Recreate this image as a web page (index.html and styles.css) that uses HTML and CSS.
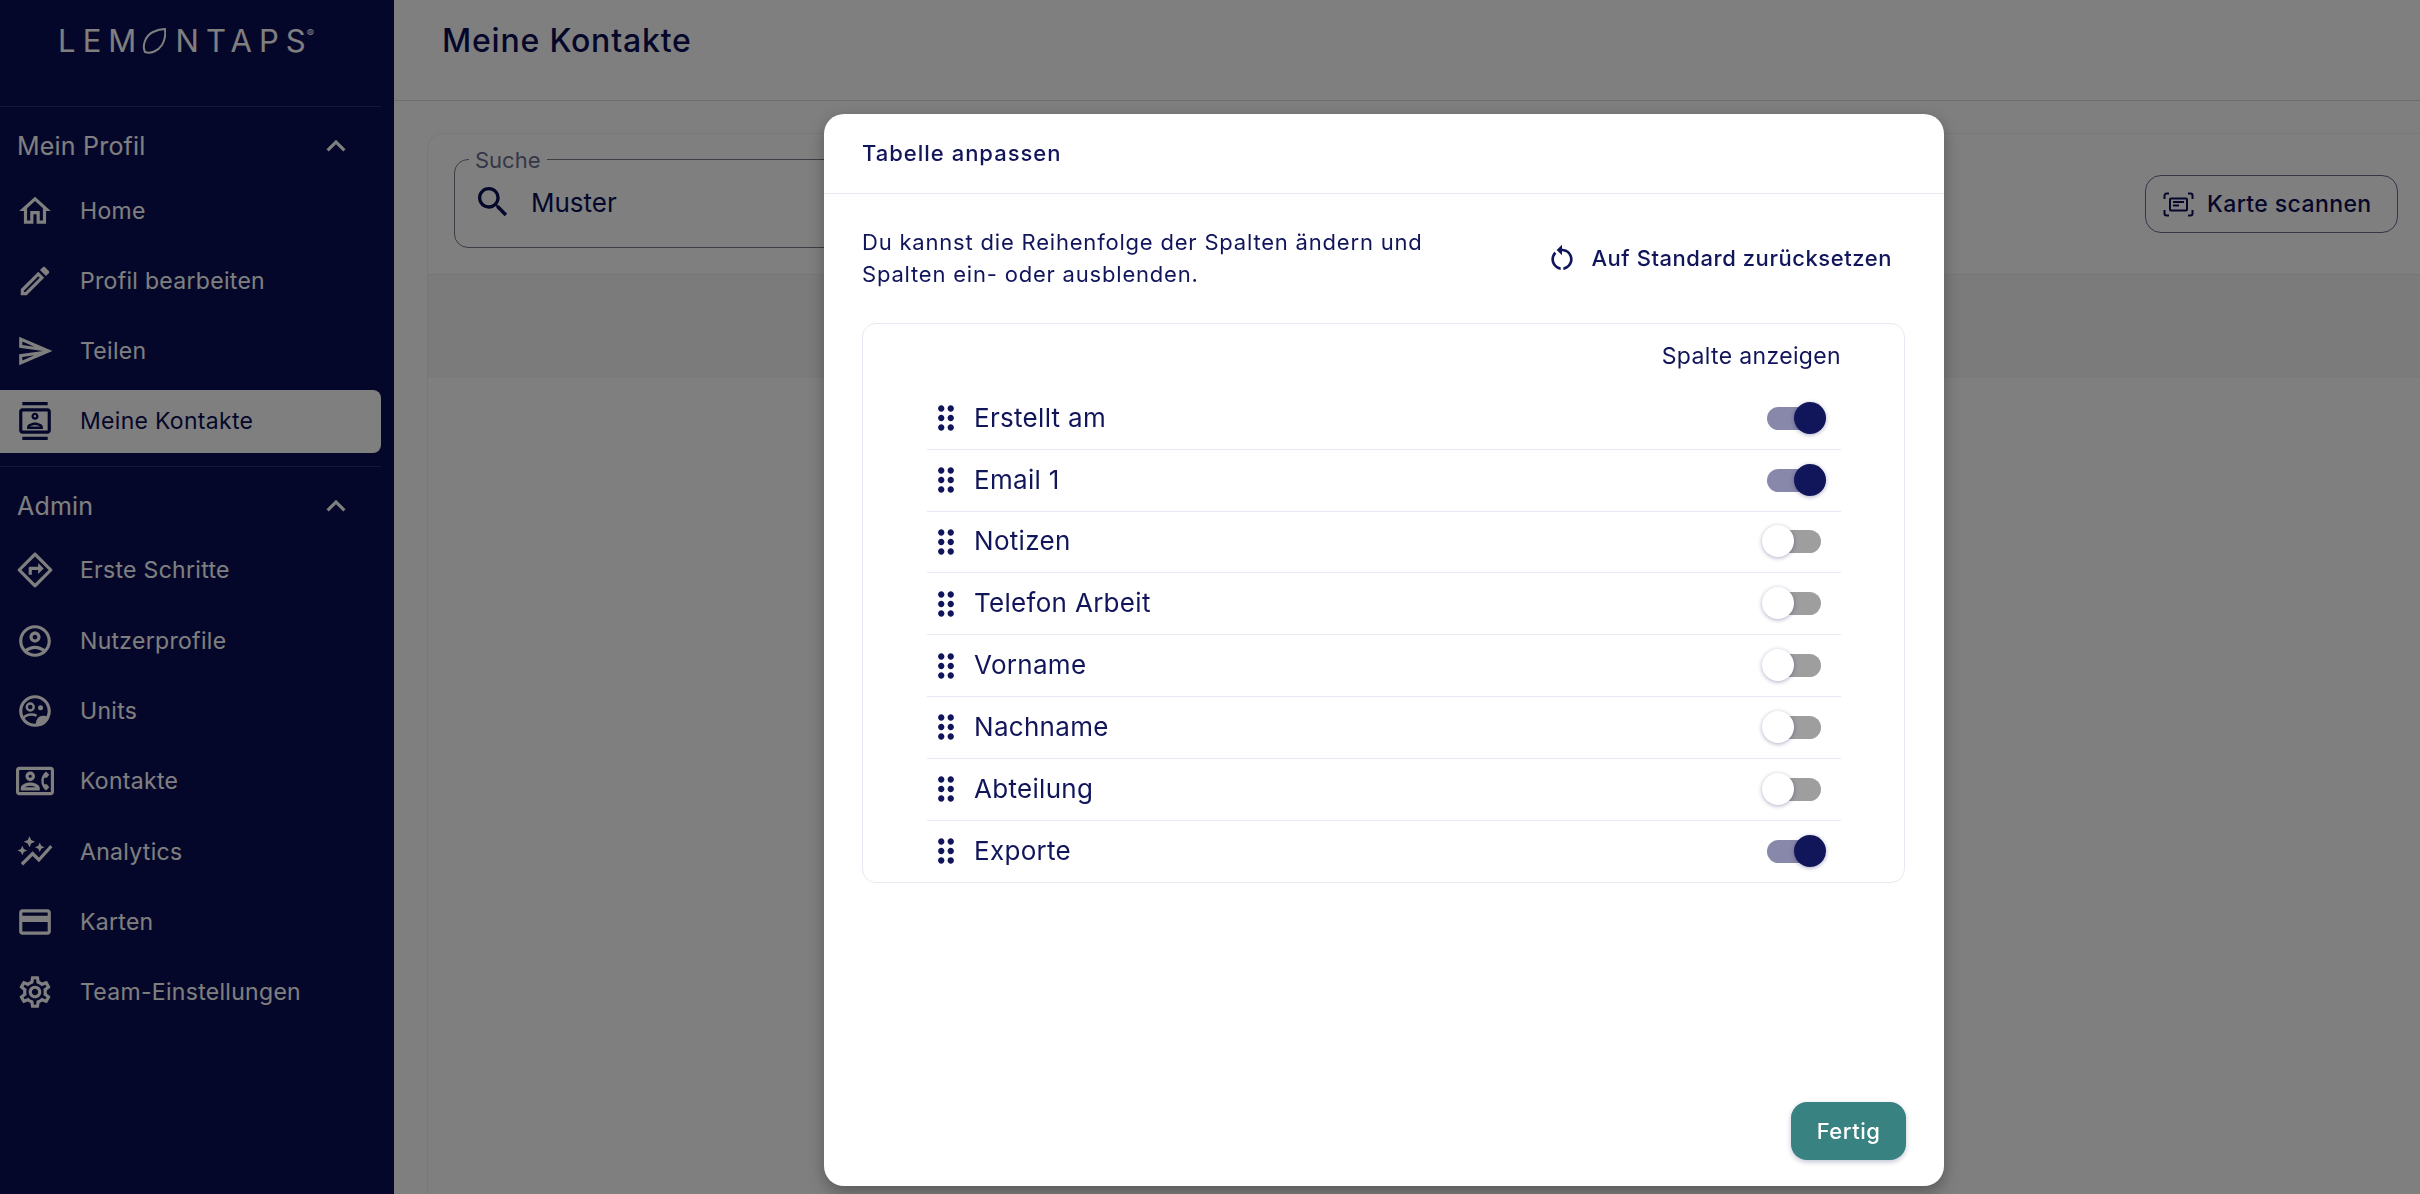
FILE: index.html
```html
<!DOCTYPE html>
<html lang="de">
<head>
  <meta charset="UTF-8">
  <title>Meine Kontakte</title>
  <link rel="stylesheet" href="styles.css">
</head>
<body>

<div class="app">
  <aside class="sidebar">
    <div class="logo">
      <span>LEM</span>
      <svg class="logo-lemon" viewBox="0 0 24 26"><path d="M3 24C0 18 3 8 11 4 16 1.500 20 1 23 1 23.500 5 23 12 20 17 16 23 9 26 3 24Z"/></svg>
      <span>NTAPS</span>
      <sup class="logo-reg">®</sup>
    </div>

    <nav class="nav-section">
      <div class="nav-head">
        <span>Mein Profil</span>
        <svg class="icon" viewBox="0 0 24 24"><path d="m12 8-6 6 1.41 1.41L12 10.83l4.59 4.58L18 14z"/></svg>
      </div>
      <ul class="nav-list">
        <li class="nav-item">
          <svg class="icon" viewBox="0 0 24 24"><path d="M12 5.69l5 4.5V18h-2v-6H9v6H7v-7.81l5-4.5M12 3L2 12h3v8h6v-6h2v6h6v-8h3L12 3z"/></svg>
          Home
        </li>
        <li class="nav-item">
          <svg class="icon" viewBox="0 0 24 24"><path d="M3 17.25V21h3.75L17.81 9.94l-3.75-3.75L3 17.25zM5.92 19H5v-.92l9.06-9.06.92.92L5.92 19zM20.71 5.63l-2.34-2.34c-.2-.2-.45-.29-.71-.29s-.51.1-.7.29l-1.83 1.83 3.75 3.75 1.83-1.83c.39-.39.39-1.02 0-1.41z"/></svg>
          Profil bearbeiten
        </li>
        <li class="nav-item">
          <svg class="icon" viewBox="0 0 24 24"><path d="M4.01 6.03l7.51 3.22-7.52-1 .01-2.22m7.5 8.72L4 17.97v-2.22l7.51-1M2.01 3L2 10l15 2-15 2 .01 7L23 12 2.01 3z"/></svg>
          Teilen
        </li>
        <li class="nav-item active">
          <svg class="icon" viewBox="0 0 24 24"><path d="M20 0H4v2h16V0zM4 24h16v-2H4v2zM20 4H4c-1.1 0-2 .9-2 2v12c0 1.1.9 2 2 2h16c1.1 0 2-.9 2-2V6c0-1.1-.9-2-2-2zm0 14H4V6h16v12zm-8-6.75c1.24 0 2.25-1.01 2.25-2.25S13.24 6.75 12 6.75 9.75 7.76 9.75 9s1.01 2.25 2.25 2.25zm0-3c.41 0 .75.34.75.75s-.34.75-.75.75-.75-.34-.75-.75.34-.75.75-.75zM17 15.99c0-2.09-3.31-2.99-5-2.99s-5 .9-5 2.99V17h10v-1.01zm-8.19-.49c.61-.52 2.03-1 3.19-1 1.17 0 2.59.48 3.2 1H8.81z"/></svg>
          Meine Kontakte
        </li>
      </ul>
    </nav>

    <nav class="nav-section">
      <div class="nav-head">
        <span>Admin</span>
        <svg class="icon" viewBox="0 0 24 24"><path d="m12 8-6 6 1.41 1.41L12 10.83l4.59 4.58L18 14z"/></svg>
      </div>
      <ul class="nav-list">
        <li class="nav-item">
          <svg class="icon" viewBox="0 0 24 24"><path d="M14 10H9c-.6 0-1 .4-1 1v4h2v-3h4v2.5l3.5-3.5L14 7.5V10zm8.7 1.3l-10-10c-.4-.4-1-.4-1.4 0l-10 10c-.4.4-.4 1 0 1.4l10 10c.2.2.5.3.7.3s.5-.1.7-.3l10-10c.4-.4.4-1 0-1.4zM12 20.6L3.4 12 12 3.4l8.6 8.6-8.6 8.6z"/></svg>
          Erste Schritte
        </li>
        <li class="nav-item">
          <svg class="icon" viewBox="0 0 24 24"><path d="M12 2C6.48 2 2 6.48 2 12s4.48 10 10 10 10-4.48 10-10S17.52 2 12 2zM7.35 18.5C8.66 17.56 10.26 17 12 17s3.34.56 4.65 1.5c-1.31.94-2.91 1.5-4.65 1.5s-3.34-.56-4.65-1.5zm10.79-1.38C16.45 15.8 14.32 15 12 15s-4.45.8-6.14 2.12C4.7 15.73 4 13.95 4 12c0-4.42 3.58-8 8-8s8 3.58 8 8c0 1.95-.7 3.73-1.86 5.12zM12 6c-1.93 0-3.5 1.57-3.5 3.5S10.07 13 12 13s3.5-1.57 3.5-3.5S13.93 6 12 6zm0 5c-.83 0-1.5-.67-1.5-1.5S11.17 8 12 8s1.5.67 1.5 1.5S12.83 11 12 11z"/></svg>
          Nutzerprofile
        </li>
        <li class="nav-item">
          <svg class="icon" viewBox="0 0 24 24">
            <path d="M12 2C6.48 2 2 6.48 2 12s4.48 10 10 10 10-4.48 10-10S17.52 2 12 2zm0 18c-4.42 0-8-3.58-8-8s3.58-8 8-8 8 3.58 8 8-3.58 8-8 8z"/>
            <circle class="icon-line" cx="9" cy="9.5" r="2.2"/>
            <circle cx="15.5" cy="10" r="1.6"/>
            <path class="icon-line" d="M4.500 16.500c1.300-1.500 3.200-2.300 5.200-2.300 1.200 0 2.300.2 3.300.8"/>
            <path d="M12.500 21.500c-.3-3.500 1.500-6.500 4.500-6.500 1.500 0 3 .4 4 1.200C19.500 19.800 16.500 22 12.500 21.500z"/>
          </svg>
          Units
        </li>
        <li class="nav-item">
          <svg class="icon" viewBox="0 0 24 24"><path d="M22 3H2C.9 3 0 3.900 0 5v14c0 1.100.9 2 2 2h20c1.100 0 1.990-.9 1.990-2L24 5c0-1.100-.9-2-2-2zm0 16H2V5h20v14zm-2.990-1.010l1.990-2-1.510-2h-1.640c-.22-.63-.35-1.300-.35-2s.13-1.370.35-2h1.640l1.510-2-1.990-2c-1.310.98-2.280 2.370-2.730 4-.18.64-.28 1.310-.28 2s.1 1.360.28 2c.45 1.620 1.420 3.020 2.730 4zM9 12c1.650 0 3-1.350 3-3s-1.350-3-3-3-3 1.350-3 3 1.350 3 3 3zm0-4c.55 0 1 .45 1 1s-.45 1-1 1-1-.45-1-1 .45-1 1-1zm6 8.590c0-2.500-3.970-3.580-6-3.580s-6 1.080-6 3.580V18h12v-1.410zM5.480 16c.74-.5 2.220-1 3.520-1s2.770.49 3.520 1H5.480z"/></svg>
          Kontakte
        </li>
        <li class="nav-item">
          <svg class="icon" viewBox="0 0 24 24"><path d="M14.06 9.94 12 9l2.06-.94L15 6l.94 2.06L18 9l-2.06.94L15 12l-.94-2.06zM4 14l.94-2.06L7 11l-2.06-.94L4 8l-.94 2.06L1 11l2.06.94L4 14zm4.500-5 1.090-2.410L12 5.500 9.590 4.410 8.500 2 7.410 4.410 5 5.500l2.410 1.090L8.500 9zm-4 11.500 6-6.010 4 4L23 8.930l-1.410-1.410-7.090 7.970-4-4L3 19l1.500 1.500z"/></svg>
          Analytics
        </li>
        <li class="nav-item">
          <svg class="icon" viewBox="0 0 24 24"><path d="M20 4H4c-1.11 0-1.99.89-1.99 2L2 18c0 1.11.89 2 2 2h16c1.11 0 2-.89 2-2V6c0-1.11-.89-2-2-2zm0 14H4v-6h16v6zm0-10H4V6h16v2z"/></svg>
          Karten
        </li>
        <li class="nav-item">
          <svg class="icon" viewBox="0 0 24 24"><path d="M19.43 12.98c.04-.32.07-.64.07-.98 0-.34-.03-.66-.07-.98l2.11-1.65c.19-.15.24-.42.12-.64l-2-3.46c-.09-.16-.26-.25-.44-.25-.06 0-.12.01-.17.03l-2.49 1c-.52-.4-1.08-.73-1.69-.98l-.38-2.65C14.46 2.18 14.25 2 14 2h-4c-.25 0-.46.18-.49.42l-.38 2.65c-.61.25-1.17.59-1.69.98l-2.49-1c-.06-.02-.12-.03-.18-.03-.17 0-.34.09-.43.25l-2 3.46c-.13.22-.07.49.12.64l2.11 1.65c-.04.32-.07.65-.07.98 0 .33.03.66.07.98l-2.11 1.65c-.19.15-.24.42-.12.64l2 3.46c.09.16.26.25.44.25.06 0 .12-.01.17-.03l2.49-1c.52.4 1.08.73 1.69.98l.38 2.65c.03.24.24.42.49.42h4c.25 0 .46-.18.49-.42l.38-2.65c.61-.25 1.17-.59 1.69-.98l2.49 1c.06.02.12.03.18.03.17 0 .34-.09.43-.25l2-3.46c.12-.22.07-.49-.12-.64l-2.11-1.65zm-1.98-1.71c.04.31.05.52.05.73 0 .21-.02.43-.05.73l-.14 1.13.89.7 1.08.84-.7 1.21-1.27-.51-1.04-.42-.9.68c-.43.32-.84.56-1.25.73l-1.06.43-.16 1.13-.2 1.35h-1.4l-.19-1.35-.16-1.13-1.06-.43c-.43-.18-.83-.41-1.23-.71l-.91-.7-1.06.43-1.27.51-.7-1.21 1.08-.84.89-.7-.14-1.13c-.03-.31-.05-.54-.05-.74s.02-.43.05-.73l.14-1.13-.89-.7-1.08-.84.7-1.21 1.27.51 1.04.42.9-.68c.43-.32.84-.56 1.25-.73l1.06-.43.16-1.13.2-1.35h1.39l.19 1.35.16 1.13 1.06.43c.43.18.83.41 1.23.71l.91.7 1.06-.43 1.27-.51.7 1.21-1.07.85-.89.7.14 1.13zM12 8c-2.21 0-4 1.79-4 4s1.79 4 4 4 4-1.79 4-4-1.79-4-4-4zm0 6c-1.1 0-2-.9-2-2s.9-2 2-2 2 .9 2 2-.9 2-2 2z"/></svg>
          Team-Einstellungen
        </li>
      </ul>
    </nav>
  </aside>

  <main class="main">
    <header class="page-header">
      <h1 class="page-title">Meine Kontakte</h1>
    </header>
    <div class="content">
      <section class="card">
        <div class="toolbar">
          <fieldset class="search">
            <legend class="search-label">Suche</legend>
            <svg class="icon search-icon" viewBox="0 0 24 24"><path d="M15.5 14h-.79l-.28-.27C15.41 12.59 16 11.11 16 9.5 16 5.91 13.09 3 9.5 3S3 5.91 3 9.5 5.91 16 9.5 16c1.61 0 3.09-.59 4.23-1.57l.27.28v.79l5 4.99L20.49 19l-4.99-5zm-6 0C7.01 14 5 11.99 5 9.5S7.01 5 9.5 5 14 7.01 14 9.5 11.99 14 9.5 14z"/></svg>
            <span class="search-value">Muster</span>
          </fieldset>
          <button class="scan-btn" type="button">
            <svg class="scan-icon" viewBox="0 0 31 25">
              <path d="M6 1.500H3.500a2 2 0 0 0-2 2V7M25 1.500h2.500a2 2 0 0 1 2 2V7M6 23.500H3.500a2 2 0 0 1-2-2V18M25 23.500h2.500a2 2 0 0 0 2-2V18"/>
              <rect x="7" y="6.500" width="17" height="12" rx="1"/>
              <path d="M10 10h11M10 13.500h6"/>
            </svg>
            Karte scannen
          </button>
        </div>
        <div class="table-head"></div>
      </section>
    </div>
  </main>
</div>

<div class="backdrop"></div>

<div class="modal">
  <div class="modal-head">Tabelle anpassen</div>
  <div class="modal-body">
    <div class="intro">
      <p class="intro-text">Du kannst die Reihenfolge der Spalten ändern und Spalten ein- oder ausblenden.</p>
      <button class="reset-btn" type="button">
        <svg class="icon" viewBox="0 0 24 24"><path d="M12 5V2L8 6l4 4V7c3.31 0 6 2.69 6 6 0 2.97-2.17 5.43-5 5.91v2.02c3.95-.49 7-3.85 7-7.93 0-4.42-3.58-8-8-8zm-6 8c0-1.65.67-3.15 1.76-4.24L6.34 7.34C4.9 8.79 4 10.79 4 13c0 4.08 3.05 7.44 7 7.93v-2.02c-2.83-.48-5-2.94-5-5.91z"/></svg>
        Auf Standard zurücksetzen
      </button>
    </div>
    <div class="columns">
      <div class="columns-head">Spalte anzeigen</div>
      <div class="col-row"><svg class="icon drag" viewBox="0 0 24 24"><use href="#drag"/></svg><span class="col-name">Erstellt am</span><span class="switch on"><i class="thumb"></i></span></div>
      <div class="col-row"><svg class="icon drag" viewBox="0 0 24 24"><use href="#drag"/></svg><span class="col-name">Email 1</span><span class="switch on"><i class="thumb"></i></span></div>
      <div class="col-row"><svg class="icon drag" viewBox="0 0 24 24"><use href="#drag"/></svg><span class="col-name">Notizen</span><span class="switch"><i class="thumb"></i></span></div>
      <div class="col-row"><svg class="icon drag" viewBox="0 0 24 24"><use href="#drag"/></svg><span class="col-name">Telefon Arbeit</span><span class="switch"><i class="thumb"></i></span></div>
      <div class="col-row"><svg class="icon drag" viewBox="0 0 24 24"><use href="#drag"/></svg><span class="col-name">Vorname</span><span class="switch"><i class="thumb"></i></span></div>
      <div class="col-row"><svg class="icon drag" viewBox="0 0 24 24"><use href="#drag"/></svg><span class="col-name">Nachname</span><span class="switch"><i class="thumb"></i></span></div>
      <div class="col-row"><svg class="icon drag" viewBox="0 0 24 24"><use href="#drag"/></svg><span class="col-name">Abteilung</span><span class="switch"><i class="thumb"></i></span></div>
      <div class="col-row"><svg class="icon drag" viewBox="0 0 24 24"><use href="#drag"/></svg><span class="col-name">Exporte</span><span class="switch on"><i class="thumb"></i></span></div>
    </div>
  </div>
  <div class="modal-foot">
    <button class="done-btn" type="button">Fertig</button>
  </div>
</div>

<svg class="sprites" width="0" height="0">
  <symbol id="drag" viewBox="0 0 24 24"><path d="M11 18c0 1.1-.9 2-2 2s-2-.9-2-2 .9-2 2-2 2 .9 2 2zm-2-8c-1.1 0-2 .9-2 2s.9 2 2 2 2-.9 2-2-.9-2-2-2zm0-6c-1.1 0-2 .9-2 2s.9 2 2 2 2-.9 2-2-.9-2-2-2zm6 4c1.1 0 2-.9 2-2s-.9-2-2-2-2 .9-2 2 .9 2 2 2zm0 2c-1.1 0-2 .9-2 2s.9 2 2 2 2-.9 2-2-.9-2-2-2zm0 6c-1.1 0-2 .9-2 2s.9 2 2 2 2-.9 2-2-.9-2-2-2z"/></symbol>
</svg>

</body>
</html>
```

FILE: styles.css
```css
* {
  box-sizing: border-box;
}
html, body {
  height: 100%;
}
body {
  margin: 0;
  overflow: hidden;
  font-family: Inter, "Noto Sans", sans-serif;
  color: #11155a;
  background-color: white;
}
ul {
  list-style: none;
  margin: 0;
  padding: 0;
}
button {
  font-family: inherit;
  background: none;
  border: none;
  padding: 0;
  color: inherit;
}
.icon {
  width: 38px;
  height: 38px;
  fill: currentColor;
  flex-shrink: 0;
}
.icon-line {
  fill: none;
  stroke: currentColor;
  stroke-width: 1.5;
}
.sprites {
  position: absolute;
}

/* Page behind the dialog */
.app {
  display: flex;
  height: 100vh;
}
.sidebar {
  width: 394px;
  flex-shrink: 0;
  padding-right: 13px;
  background-color: #0a0e54;
  color: white;
}
.logo {
  height: 106px;
  padding: 23px 0 0 58px;
  display: flex;
  align-items: flex-start;
  font-size: 31px;
  font-weight: 400;
  letter-spacing: 7.1px;
  line-height: 36px;
}
.logo-lemon {
  width: 24px;
  height: 26px;
  margin: 5px 9px 0 -1px;
  fill: none;
  stroke: white;
  stroke-width: 2;
}
.logo-reg {
  font-size: 11px;
  line-height: 11px;
  letter-spacing: 0;
  margin: 5px 0 0 -6px;
}
.nav-section {
  border-top: 1px solid #2a2e6c;
  padding-bottom: 13px;
}
.nav-head {
  height: 62px;
  margin: 8px 0 2px;
  padding: 0 26px 0 17px;
  display: flex;
  align-items: center;
  justify-content: space-between;
  font-size: 25px;
  letter-spacing: 0.2px;
}
.nav-list {
  display: flex;
  flex-direction: column;
  gap: 7.3px;
}
.nav-item {
  height: 63px;
  padding-left: 16px;
  display: flex;
  align-items: center;
  gap: 26px;
  font-size: 23px;
  letter-spacing: 0.3px;
  border-radius: 0 8px 8px 0;
}
.nav-item.active {
  background-color: white;
  color: #0a0e54;
}
.main {
  flex: 1;
  min-width: 0;
  background-color: white;
}
.page-header {
  height: 101px;
  padding: 0 48px;
  display: flex;
  align-items: center;
  border-bottom: 1px solid #dcdcdc;
}
.page-title {
  margin: 0 0 20px;
  font-size: 32px;
  font-weight: 500;
  letter-spacing: 0.8px;
  color: #0a0e54;
}
.content {
  padding: 32px 0 0 33px;
}
.card {
  height: 1100px;
  border: 1px solid #f0f0f0;
  border-right: none;
  border-radius: 16px 0 0 0;
}
.toolbar {
  height: 141px;
  padding: 0 22px 0 26px;
  display: flex;
  align-items: center;
  justify-content: space-between;
  border-bottom: 1px solid #ececec;
}
.search {
  width: 700px;
  height: 101px;
  margin: 0 0 14px;
  padding: 0 0 15px 20px;
  display: flex;
  align-items: center;
  gap: 18px;
  border: 1px solid #7a7a8a;
  border-radius: 14px;
}
.search-label {
  padding: 0 6px;
  margin-left: -6px;
  font-size: 22px;
  color: #6a6e90;
}
.search-icon {
  width: 40px;
  height: 40px;
  margin-left: -2px;
  color: #0a0e54;
}
.search-value {
  font-size: 26px;
  color: #0a0e54;
}
.scan-btn {
  width: 253px;
  height: 58px;
  padding-left: 17px;
  display: flex;
  align-items: center;
  gap: 13px;
  font-size: 23px;
  font-weight: 500;
  letter-spacing: 0.4px;
  color: #0a0e54;
  border: 1px solid #6a6e90;
  border-radius: 16px;
}
.scan-icon {
  width: 31px;
  height: 25px;
  fill: none;
  stroke: #0a0e54;
  stroke-width: 2;
}
.table-head {
  height: 103px;
  background-color: #f6f6f6;
}
.backdrop {
  position: fixed;
  inset: 0;
  background-color: rgba(0,0,0,0.5);
}

/* Dialog */
.modal {
  position: absolute;
  left: 824px;
  top: 114px;
  width: 1120px;
  height: 1072px;
  display: flex;
  flex-direction: column;
  background-color: white;
  border-radius: 20px;
  box-shadow: 0 6px 16px rgba(0,0,0,0.3);
}
.modal-head {
  height: 80px;
  padding: 0 38px 2px;
  display: flex;
  align-items: center;
  font-size: 22px;
  font-weight: 500;
  letter-spacing: 1px;
  border-bottom: 1px solid #e8e8f2;
}
.modal-body {
  flex: 1;
  padding: 32px 39px 0 38px;
}
.intro {
  display: flex;
  align-items: center;
  justify-content: space-between;
  padding-right: 13px;
}
.intro-text {
  width: 600px;
  margin: 0;
  font-size: 22px;
  letter-spacing: 0.8px;
  line-height: 32px;
}
.reset-btn {
  display: flex;
  align-items: center;
  gap: 13px;
  font-size: 22px;
  font-weight: 500;
  letter-spacing: 0.55px;
  color: #11155a;
}
.reset-btn .icon {
  width: 32px;
  height: 32px;
}
.columns {
  margin-top: 33px;
  padding: 0 63px 0 64px;
  border: 1px solid #e8e8f2;
  border-radius: 14px;
}
.columns-head {
  height: 64px;
  display: flex;
  align-items: center;
  justify-content: flex-end;
  font-size: 23px;
  letter-spacing: 0.35px;
}
.col-row {
  height: 61.8px;
  display: flex;
  align-items: center;
  gap: 9px;
  padding-right: 20px;
  border-bottom: 1px solid #e8e8f2;
}
.col-row:last-child {
  border-bottom: none;
}
.drag {
  width: 38px;
  height: 38px;
}
.col-name {
  flex: 1;
  padding-bottom: 2px;
  font-size: 26px;
  letter-spacing: 0.3px;
}
.switch {
  position: relative;
  width: 54px;
  height: 23px;
  border-radius: 12px;
  background-color: #9e9e9e;
}
.switch.on {
  background-color: #8888aa;
}
.thumb {
  position: absolute;
  top: -5px;
  left: -5px;
  width: 32px;
  height: 32px;
  border-radius: 50%;
  background-color: white;
  box-shadow: 0 1px 4px rgba(17,21,90,0.35);
}
.switch.on .thumb {
  left: 27px;
  background-color: #11155a;
}
.modal-foot {
  padding: 0 38px 26px;
  display: flex;
  justify-content: flex-end;
}
.done-btn {
  width: 115px;
  height: 58px;
  font-size: 22px;
  font-weight: 500;
  letter-spacing: 0.5px;
  color: white;
  background-color: #398282;
  border-radius: 16px;
  box-shadow: 0 2px 5px rgba(17,21,90,0.25);
}
```
